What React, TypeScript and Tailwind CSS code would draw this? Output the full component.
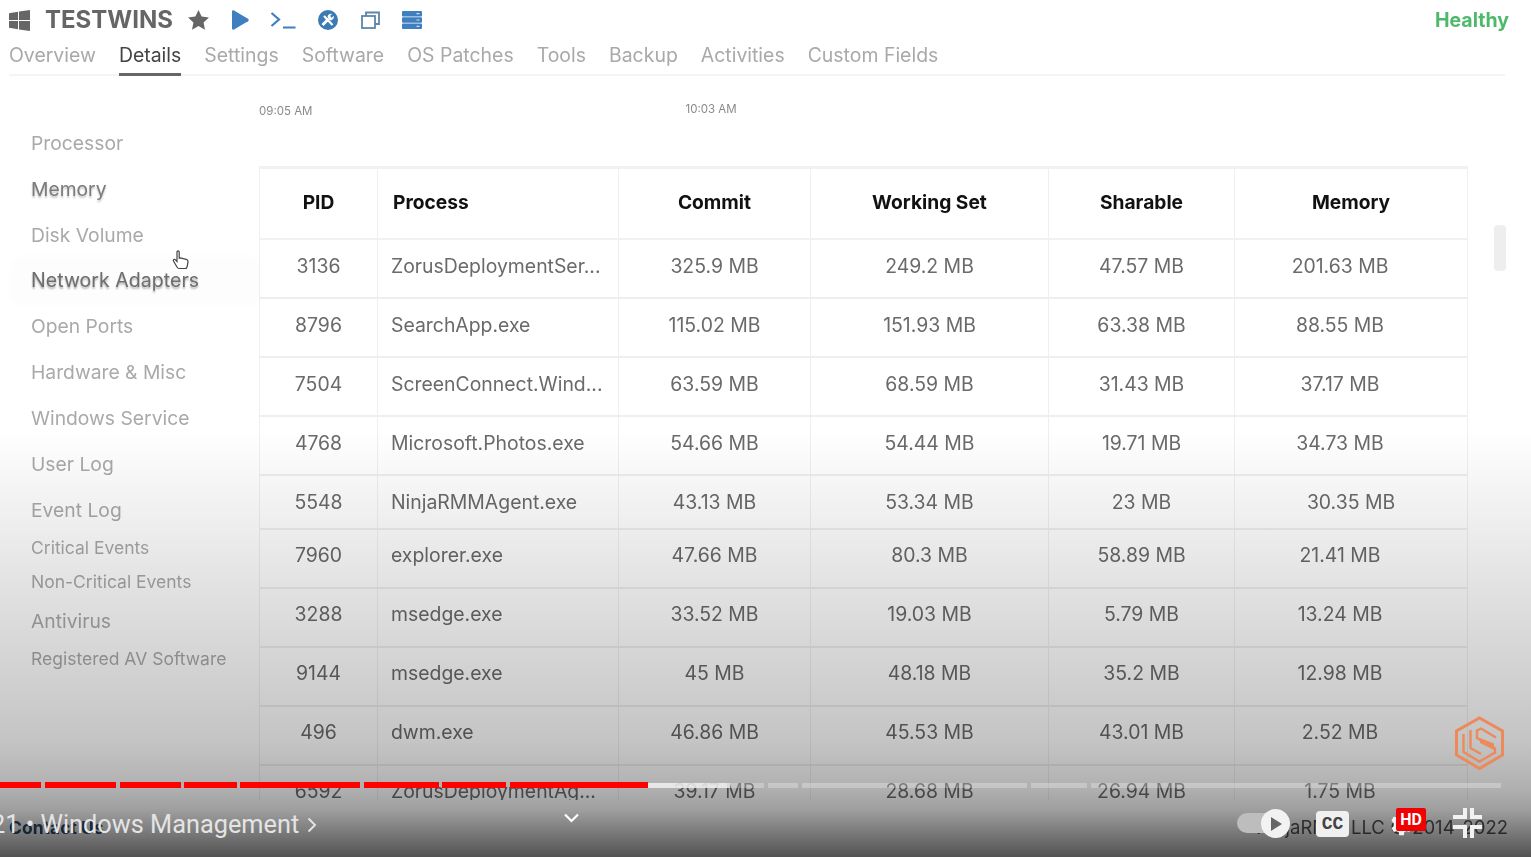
import React from "react";

const rows = [
  ["3136", "ZorusDeploymentSer...", "325.9 MB", "249.2 MB", "47.57 MB", "201.63 MB"],
  ["8796", "SearchApp.exe", "115.02 MB", "151.93 MB", "63.38 MB", "88.55 MB"],
  ["7504", "ScreenConnect.Wind...", "63.59 MB", "68.59 MB", "31.43 MB", "37.17 MB"],
  ["4768", "Microsoft.Photos.exe", "54.66 MB", "54.44 MB", "19.71 MB", "34.73 MB"],
  ["5548", "NinjaRMMAgent.exe", "43.13 MB", "53.34 MB", "23 MB", "30.35 MB"],
  ["7960", "explorer.exe", "47.66 MB", "80.3 MB", "58.89 MB", "21.41 MB"],
  ["3288", "msedge.exe", "33.52 MB", "19.03 MB", "5.79 MB", "13.24 MB"],
  ["9144", "msedge.exe", "45 MB", "48.18 MB", "35.2 MB", "12.98 MB"],
  ["496", "dwm.exe", "46.86 MB", "45.53 MB", "43.01 MB", "2.52 MB"],
  ["6592", "ZorusDeploymentAg...", "39.17 MB", "28.68 MB", "26.94 MB", "1.75 MB"],
];

const tabs = ["Overview", "Details", "Settings", "Software", "OS Patches", "Tools", "Backup", "Activities", "Custom Fields"];

const side = [
  { t: "Processor", c: "h-[46px] text-[#a9a9a9]" },
  { t: "Memory", c: "h-[46px] text-[#7b7b7b] [text-shadow:0_2px_2px_rgba(0,0,0,0.25)]" },
  { t: "Disk Volume", c: "h-[46px] text-[#a9a9a9]" },
  { t: "Network Adapters", c: "h-[46px] -ml-[19px] pl-[19px] rounded-lg bg-[#fdfdfd] shadow-[0_0_12px_#fcfcfc] text-[19.600px] text-[#6e6e6e] [text-shadow:0_2px_2px_rgba(0,0,0,0.3)]" },
  { t: "Open Ports", c: "h-[45px] text-[#a9a9a9]" },
  { t: "Hardware & Misc", c: "h-[46px] text-[#a9a9a9]" },
  { t: "Windows Service", c: "h-[46px] text-[#a9a9a9]" },
  { t: "User Log", c: "h-[46px] text-[#a9a9a9]" },
  { t: "Event Log", c: "h-[46px] text-[#a9a9a9]" },
  { t: "Critical Events", c: "h-[30px] text-[17.500px] text-[#a9a9a9]" },
  { t: "Non-Critical Events", c: "h-[38px] text-[17.500px] text-[#a9a9a9]" },
  { t: "Antivirus", c: "h-[40px] text-[#a9a9a9]" },
  { t: "Registered AV Software", c: "h-[36px] text-[17.500px] text-[#a9a9a9]" },
];

const red = [[0, 41], [45, 71], [120, 61], [184, 53], [240, 120], [364, 75], [442, 64], [510, 138]];
const grey = [[730, 34], [768, 30], [802, 225], [1031, 56], [1091, 410]];

const Cell = "border-x border-[#efefef]";
const Head = "border-x border-[#efefef] pb-[2px] text-center font-bold text-[#111] text-[19.200px]";

export default function App() {
  return (
    <div className="relative w-[1531px] h-[857px] overflow-hidden bg-white font-['Inter',sans-serif]">
      <div className="h-[857px] flex flex-col blur-[0.4px]">
        {/* Header */}
        <div className="h-[40px] flex items-center pl-[9px] pr-[22px] shrink-0">
          <svg width="21" height="21" viewBox="0 0 21 21" fill="#666">
            <path d="M0 3.2 9 1.8V10H0ZM10 1.6 21 0V10H10ZM0 11H9V19.2L0 17.8ZM10 11H21V21L10 19.4Z" />
          </svg>
          <span className="ml-[15px] text-[24px] font-bold text-[#666] leading-none">TESTWINS</span>
          <svg className="ml-[15px]" width="21" height="20" viewBox="0 0 24 23" fill="#666">
            <path d="M12 0l3.6 7.6 8.4 1-6.2 5.7 1.7 8.3L12 18.400l-7.500 4.200 1.700-8.300L0 8.600l8.400-1z" />
          </svg>
          <svg className="ml-[22px]" width="18" height="20" viewBox="0 0 18 20" fill="#3f7fc0">
            <path d="M1 1.500c0-1 1-1.500 2-1L17 8.800c1 .6 1 1.800 0 2.400L3 19.500c-1 .5-2 0-2-1z" />
          </svg>
          <svg className="ml-[21px]" width="26" height="18" viewBox="0 0 26 18" fill="none" stroke="#3f7fc0" strokeWidth="2.200">
            <path d="M1.500 2 9 8.500 1.500 15M13 16.500h12.500" />
          </svg>
          <svg className="ml-[22px]" width="20" height="20" viewBox="0 0 20 20">
            <circle cx="10" cy="10" r="10" fill="#3d7ab5" />
            <path d="M4.500 15 10.500 9" fill="none" stroke="#fff" strokeWidth="2.800" />
            <path d="M6 6l8.500 9" fill="none" stroke="#fff" strokeWidth="2.200" />
            <path d="M9.500 6.500c.8-2 2.500-3 4.500-2.500l-2 2 1.800 1.800 2-2c.5 2-.6 3.800-2.500 4.400-1.500.4-3-.4-3.800-3.700z" fill="#fff" />
          </svg>
          <svg className="ml-[23px]" width="19" height="18" viewBox="0 0 19 18" fill="none" stroke="#5f85a8" strokeWidth="1.800">
            <rect x="1" y="5" width="13" height="12" />
            <path d="M5 5V1.500h13V13h-4" />
          </svg>
          <svg className="ml-[22px]" width="20" height="20" viewBox="0 0 20 20" fill="#3f7fc0">
            <rect y="1" width="20" height="5.400" rx="1" />
            <rect y="7.300" width="20" height="5.400" rx="1" />
            <rect y="13.600" width="20" height="5.400" rx="1" />
            <path d="M14.500 3h3v1.200h-3zM14.500 9.400h3v1.200h-3zM14.500 15.700h3v1.200h-3z" fill="#cfe0f0" />
          </svg>
          <span className="ml-auto mt-[1px] text-[19.500px] font-bold text-[#4fb96b]">Healthy</span>
        </div>

        {/* Tabs */}
        <div className="h-[36px] ml-[9px] mr-[26px] flex gap-[23px] border-b-2 border-[#f4f4f4] shrink-0 text-[19.450px] text-[#a9a9a9]">
          {tabs.map((t) =>
            t === "Details" ? (
              <div key={t} className="h-[36px] border-b-[3px] border-[#666] text-[#444] leading-[31px]">{t}</div>
            ) : (
              <div key={t} className="h-[36px] leading-[31px]">{t}</div>
            )
          )}
        </div>

        {/* Body */}
        <div className="h-[724px] shrink-0 flex overflow-hidden">
          <div className="w-[259px] shrink-0 pl-[31px] pt-[44px] text-[19.300px]">
            {side.map((s) => (
              <div key={s.t} className={"flex items-center " + s.c}>{s.t}</div>
            ))}
          </div>
          <div className="flex-1 flex flex-col">
            <div className="h-[90px] shrink-0 flex items-start text-[11.500px] text-[#8a8a8a]">
              <span className="mt-[28px] leading-[14px] h-[14px]">09:05 AM</span>
              <span className="ml-[373px] mt-[28px] leading-[11px] h-[11px] overflow-hidden">
                <span className="block -mt-[2px] leading-[14px]">10:03 AM</span>
              </span>
            </div>
            <div className="flex">
              <table className="w-[1208px] shrink-0 table-fixed border-collapse border-t-[3px] border-[#f1f1f1]">
                <colgroup>
                  <col className="w-[118px]" />
                  <col className="w-[241px]" />
                  <col className="w-[192px]" />
                  <col className="w-[238px]" />
                  <col className="w-[186px]" />
                  <col className="w-[233px]" />
                </colgroup>
                <thead>
                  <tr className="h-[71px] border-b-2 border-[#f1f1f1]">
                    <th className={Head}>PID</th>
                    <th className={Head + " !text-left pl-[15px]"}>Process</th>
                    <th className={Head}>Commit</th>
                    <th className={Head}>Working Set</th>
                    <th className={Head}>Sharable</th>
                    <th className={Head}>Memory</th>
                  </tr>
                </thead>
                <tbody className="text-[19.400px] text-[#6a6a6a] text-center">
                  {rows.map((r, i) => {
                    const rowClass =
                      i === 4
                        ? "h-[54px] border-b-2 border-[#eeeeee] [&>td]:pt-[2px]"
                        : i < 4
                          ? "h-[59px] border-b-2 border-[#eeeeee] [&>td]:pb-[2px]"
                          : "h-[59px] border-b-2 border-[#eeeeee] [&>td]:pb-[4px]";
                    return (
                      <tr key={r[0]} className={rowClass}>
                        <td className={Cell}>{r[0]}</td>
                        <td className={Cell + " !text-left pl-[13px] whitespace-nowrap"}>{r[1]}</td>
                        <td className={Cell}>{r[2]}</td>
                        <td className={Cell}>{r[3]}</td>
                        <td className={Cell}>{r[4]}</td>
                        <td className={i === 4 ? Cell : Cell + " pr-[22px]"}>{r[5]}</td>
                      </tr>
                    );
                  })}
                </tbody>
              </table>
              <div className="ml-[26px] mt-[59px] w-[12px] h-[46px] rounded bg-[#eeeeee]" />
            </div>
          </div>
        </div>

        {/* Page footer behind the player */}
        <div className="flex-1 flex items-center pl-[9px] pr-[23px] pb-[1px] text-[18.500px] text-[#555]">
          <span className="text-[17.500px] font-bold text-[#2f4a68]">Contact Us</span>
          <span className="ml-auto">NinjaRMM LLC © 2014-2022</span>
        </div>
      </div>

      {/* Player scrim */}
      <div className="absolute inset-x-0 top-[430px] bottom-0 pointer-events-none bg-[linear-gradient(to_bottom,rgba(0,0,0,0)_0%,rgba(0,0,0,0.07)_23%,rgba(0,0,0,0.23)_73%,rgba(0,0,0,0.31)_84%,rgba(0,0,0,0.38)_89%,rgba(0,0,0,0.68)_100%)]" />

      {/* Mouse cursor */}
      <svg className="absolute left-[172px] top-[250px]" width="18" height="20" viewBox="0 0 18 20" fill="#fff" stroke="#444" strokeWidth="1.200">
        <path d="M5 2c0-1.500 2.200-1.500 2.200 0v6l1-.2 6 1.500c1.500.4 2 1 1.800 2.500l-.8 4.500c-.2 1-.8 2.200-2 2.200H7c-1 0-1.500-.6-2-1.500L1.500 11c-.6-1.300 1-2.200 2-1.200L5 11.500z" />
      </svg>

      {/* Channel logo */}
      <svg className="absolute left-[1440px] top-[705px]" width="80" height="75" viewBox="0 0 80 75" fill="none" stroke="#ec8a5c" strokeWidth="2.400">
        <path d="M39.500 13 62.500 26V50L39.500 63.500 16.500 50V26Z" strokeWidth="3" />
        <path d="M23.500 29V47L39.500 56.500 55 47.500" />
        <path d="M30.500 25V43L41 49" />
        <path d="M56 32.500 41 23.500 37 25.500V33L55 43.500V49" />
        <path d="M40 33 54 38.500V45L40 38Z" fill="#ec8a5c" stroke="none" />
      </svg>

      {/* Progress bar */}
      <div className="absolute top-[783px] left-[648px] w-[82px] h-[5px] bg-[rgba(240,240,240,0.85)]" />
      {grey.map(([x, w]) => (
        <div key={x} className="absolute top-[783px] h-[5px] bg-[rgba(255,255,255,0.28)]" style={{ left: x, width: w }} />
      ))}
      {red.map(([x, w]) => (
        <div key={x} className="absolute top-[782px] h-[6px] bg-[#ff0000]" style={{ left: x, width: w }} />
      ))}

      {/* Chapter title */}
      <div className="absolute left-[-9px] top-[810px] flex items-center text-[25.300px] leading-[29px] text-[#e4e4e4] whitespace-nowrap font-['Roboto',sans-serif]">
        <span>21 • Windows Management</span>
        <svg className="ml-[8px]" width="10" height="16" viewBox="0 0 10 16" fill="none" stroke="#e4e4e4" strokeWidth="2">
          <path d="M1.500 1.500 8 8l-6.500 6.500" />
        </svg>
      </div>

      {/* Collapse chevron */}
      <svg className="absolute left-[564px] top-[813px]" width="15" height="10" viewBox="0 0 15 10" fill="none" stroke="#fff" strokeWidth="2.200">
        <path d="M1 1.500 7.500 8 14 1.500" />
      </svg>

      {/* Autoplay */}
      <div className="absolute left-[1237px] top-[813px] w-[44px] h-[20px] rounded-full bg-[#bdbdbd]" />
      <div className="absolute left-[1261px] top-[809px] w-[29px] h-[29px] rounded-full bg-[#f2f2f2] flex items-center justify-center">
        <svg width="12" height="14" viewBox="0 0 12 14" fill="#666"><path d="M1 0l11 7-11 7z" /></svg>
      </div>

      {/* CC */}
      <div className="absolute left-[1316px] top-[811px] w-[33px] h-[26px] rounded-[4px] bg-[#f0f0f0] flex items-center justify-center text-[18px] leading-none font-bold text-[#444] font-['Liberation_Mono',monospace]">
        CC
      </div>

      {/* Gear and HD */}
      <svg className="absolute left-[1386px] top-[811px]" width="28" height="28" viewBox="0 0 24 24" fill="#f2f2f2">
        <path d="M19.400 13c.1-.3.100-.7.100-1s0-.7-.1-1l2.100-1.600-2-3.500-2.500 1a7.500 7.500 0 0 0-1.700-1L15.300 2h-4l-.4 2.700a7.500 7.500 0 0 0-1.700 1l-2.500-1-2 3.500L6.800 11a7.700 7.700 0 0 0 0 2l-2.100 1.600 2 3.500 2.500-1c.5.400 1.100.7 1.700 1l.4 2.700h4l.4-2.700c.6-.3 1.200-.6 1.700-1l2.500 1 2-3.500z" />
      </svg>
      <div className="absolute left-[1396px] top-[808px] w-[30px] h-[23px] rounded-[2px] bg-[#f00000] flex items-center justify-center text-[16px] font-bold text-white leading-none font-['Roboto',sans-serif]">
        HD
      </div>

      {/* Exit full screen */}
      <svg className="absolute left-[1452px] top-[808px]" width="30" height="30" viewBox="0 0 30 30" fill="none" stroke="#f2f2f2" strokeWidth="4">
        <path d="M13 0V9H1M20 0V9H30M13 30V19H1M20 30V19H30" />
      </svg>
    </div>
  );
}
